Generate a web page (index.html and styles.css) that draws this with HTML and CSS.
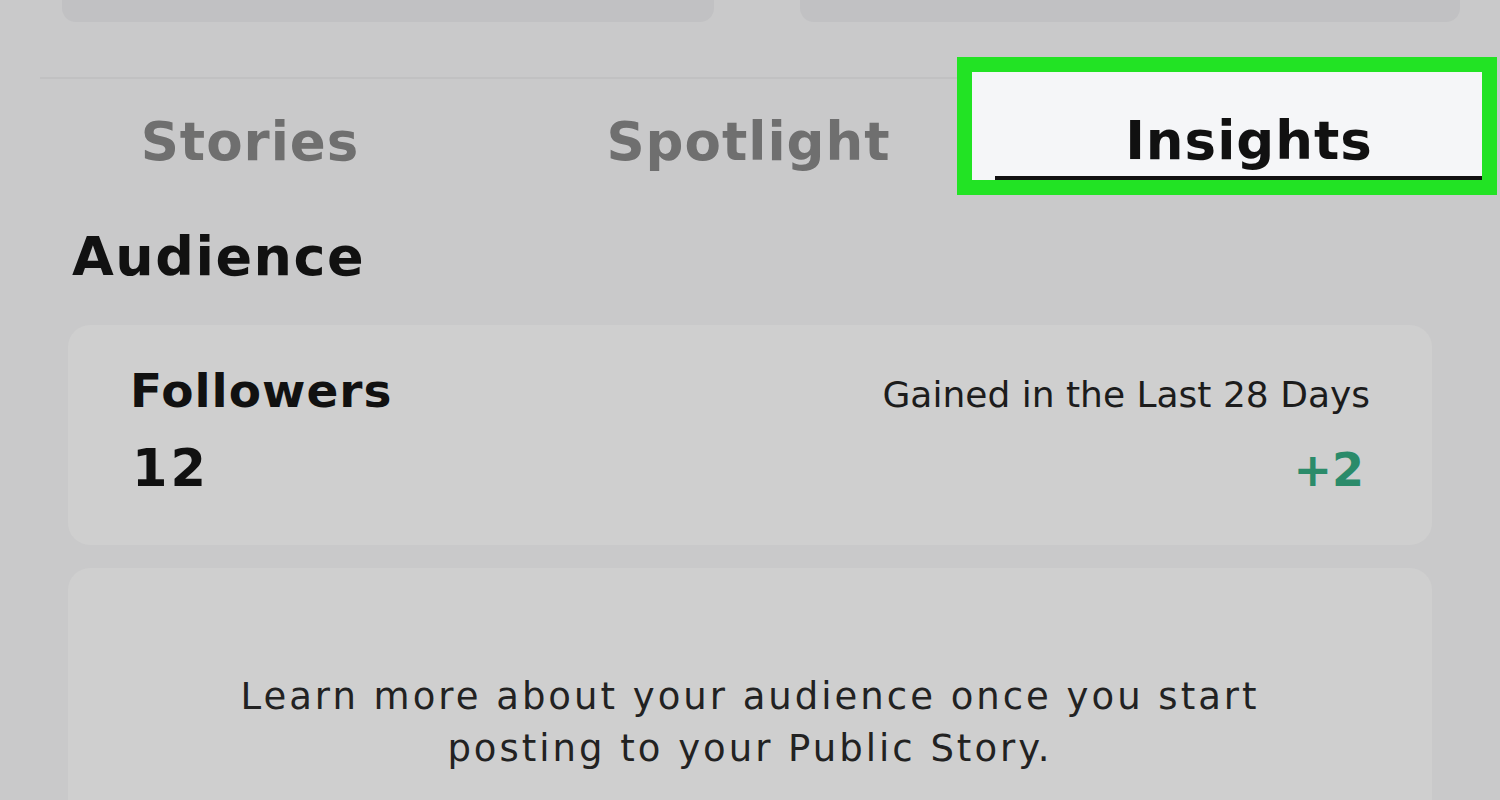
FILE: index.html
```html
<!DOCTYPE html>
<html lang="en">
<head>
    <meta charset="UTF-8">
    <meta name="viewport" content="width=device-width, initial-scale=1.0">
    <title>Insights</title>
    <link rel="stylesheet" href="styles.css">
</head>
<body>
    <div class="top-buttons">
        <div class="top-btn left"></div>
        <div class="top-btn right"></div>
    </div>

    <nav class="tabs">
        <div class="tab stories">Stories</div>
        <div class="tab spotlight">Spotlight</div>
        <div class="tab insights">
            <span class="tab-label">Insights</span>
            <div class="tab-bar"></div>
        </div>
    </nav>

    <h2 class="section-title">Audience</h2>

    <div class="card followers">
        <div class="stat-row">
            <div class="stat-label">Followers</div>
            <div class="stat-note">Gained in the Last 28 Days</div>
        </div>
        <div class="stat-row values">
            <div class="stat-value">12</div>
            <div class="stat-gain">+2</div>
        </div>
    </div>

    <div class="card empty">
        <p>Learn more about your audience once you start<br>posting to your Public Story.</p>
    </div>
</body>
</html>
```

FILE: styles.css
```css
/* Global Styles */
* {
    box-sizing: border-box;
    margin: 0;
    padding: 0;
}

body {
    width: 1500px;
    height: 800px;
    overflow: hidden;
    background-color: #c9c9ca;
    font-family: "DejaVu Sans", "Open Sans", sans-serif;
    color: #111;
}

/* Top buttons (cut off) */
.top-buttons {
    display: flex;
    height: 22px;
    padding-left: 62px;
    gap: 86px;
}

.top-btn {
    height: 22px;
    background-color: #c1c1c3;
    border-radius: 0 0 14px 14px;
}

.top-btn.left {
    width: 652px;
}

.top-btn.right {
    width: 660px;
}

/* Tabs */
.tabs {
    display: flex;
    margin-top: 35px;
    height: 138px;
}

.tab {
    font-size: 53px;
    font-weight: 700;
    letter-spacing: 1px;
    color: #6f6f6f;
    text-align: center;
    line-height: 62px;
}

.stories {
    width: 460px;
    margin-left: 40px;
    padding-right: 40px;
    margin-top: 20px;
    padding-top: 32px;
    border-top: 2px solid #c1c1c2;
}

.spotlight {
    width: 457px;
    margin-top: 20px;
    padding-top: 32px;
    padding-left: 40px;
    border-top: 2px solid #c1c1c2;
}

.insights {
    width: 540px;
    border: 15px solid #22e324;
    background-color: #f5f6f8;
    color: #111;
    display: flex;
    flex-direction: column;
    padding-top: 38px;
}

.tab-label {
    display: block;
    padding-left: 44px;
}

.tab-bar {
    margin-top: auto;
    margin-left: 23px;
    height: 4px;
    background-color: #111;
}

/* Audience */
.section-title {
    margin: 30px 0 0 72px;
    font-size: 54px;
    font-weight: 700;
    letter-spacing: 1.5px;
    line-height: 64px;
}

.card {
    width: 1364px;
    margin-left: 68px;
    background-color: #cfcfcf;
    border-radius: 22px;
}

.followers {
    margin-top: 36px;
    height: 220px;
    padding: 38px 62px 0 62px;
}

.stat-row {
    display: flex;
    justify-content: space-between;
    align-items: baseline;
}

.stat-row.values {
    margin-top: 22px;
}

.stat-label {
    font-size: 47px;
    font-weight: 700;
    letter-spacing: 1px;
    line-height: 56px;
}

.stat-value {
    font-size: 51px;
    font-weight: 700;
    letter-spacing: 3px;
    line-height: 56px;
    padding-left: 2px;
}

.stat-note {
    font-size: 36px;
    color: #1c1c1c;
}

.stat-gain {
    font-size: 46px;
    font-weight: 700;
    line-height: 56px;
    color: #2b8b6a;
    padding-right: 6px;
}

.empty {
    margin-top: 23px;
    height: 260px;
    padding-top: 103px;
    text-align: center;
}

.empty p {
    font-size: 37px;
    letter-spacing: 3px;
    line-height: 52px;
    color: #222;
}
```
